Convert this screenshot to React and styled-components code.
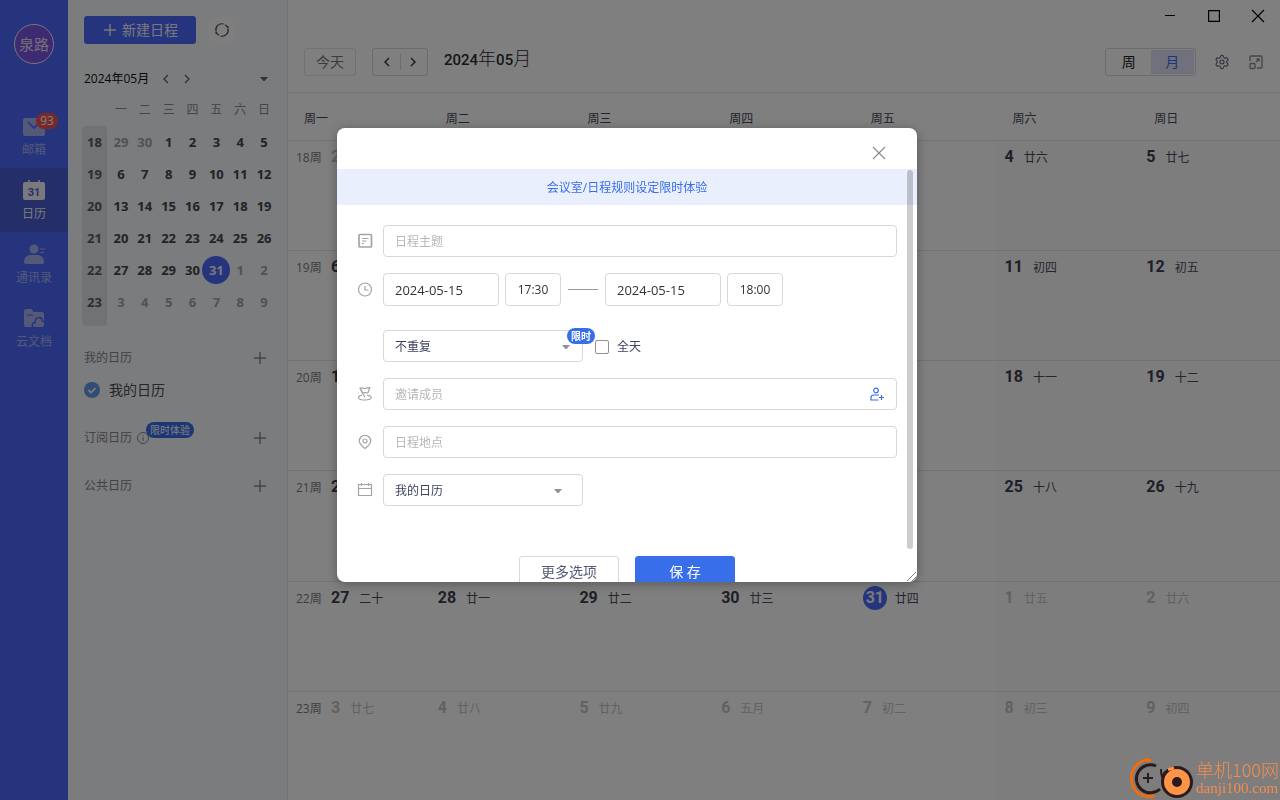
import React, { useState } from 'react';
import styled, { createGlobalStyle, css } from 'styled-components';
import { Settings } from 'lucide-react';

const GlobalStyle = createGlobalStyle`
  * {
    box-sizing: border-box;
  }

  body {
    margin: 0;
    overflow: hidden;
    color: #44475a;
    font-family: 'Open Sans', 'Noto Sans CJK SC', sans-serif;
    font-size: 12px;
    line-height: 16px;
  }

  button, input, select {
    margin: 0;
    padding: 0;
    border: none;
    background: none;
    color: inherit;
    font: inherit;
    outline: none;
  }

  button {
    cursor: pointer;
  }

  svg {
    display: block;
    flex: none;
  }
`;

const Page = styled.div`
  display: flex;
  height: 100vh;
  background: #fff;
`;

/* ---------- left navigation ---------- */

const NavWrapper = styled.nav`
  flex: none;
  width: 68px;
  background: #4d69fd;
`;

const Avatar = styled.div`
  width: 40px;
  height: 40px;
  margin: 24px auto 40px;
  border: 1px solid #f0ecfa;
  border-radius: 50%;
  background: #7c54e0;
  color: #e4def4;
  font-size: 15px;
  line-height: 38px;
  text-align: center;
`;

const NavItem = styled.button`
  position: relative;
  display: flex;
  flex-direction: column;
  align-items: center;
  gap: 5px;
  width: 100%;
  height: 64px;
  padding-top: 11px;
  color: ${({ $active }) => ($active ? '#f4f4fa' : '#a8b2f0')};
  background: ${({ $active }) => ($active ? '#495cd2' : 'transparent')};
`;

const NavBadge = styled.span`
  position: absolute;
  top: 9px;
  left: 36px;
  width: 22px;
  height: 16px;
  border-radius: 8px;
  background: #f0524f;
  color: #fff;
  text-align: center;
`;

/* ---------- side panel ---------- */

const Side = styled.aside`
  flex: none;
  width: 220px;
  padding: 16px 11px 0 16px;
  border-right: 1px solid #e4e6e9;
  background: #f6f8fa;
`;

const SideTop = styled.div`
  display: flex;
  gap: 12px;
`;

const NewButton = styled.button`
  display: flex;
  align-items: center;
  justify-content: center;
  gap: 6px;
  width: 112px;
  height: 28px;
  padding-left: 2px;
  border-radius: 3px;
  background: #4d69fd;
  color: #f0f0f8;
  font-size: 14px;
`;

const RefreshButton = styled.button`
  display: flex;
  align-items: center;
  justify-content: center;
  width: 28px;
  height: 28px;
  border-radius: 50%;
  background: #fdfdfd;
`;

const MonthRow = styled.div`
  display: flex;
  align-items: center;
  gap: 13px;
  margin: 27px 8px 7px 0;
  color: #101010;

  button {
    color: #666;
  }

  button:last-child {
    margin-left: auto;
  }
`;

const MiniCalendar = styled.div`
  display: flex;
  align-items: flex-end;
  gap: 2px;
  margin: 0 0 16px -2px;
  font-size: 13px;
  font-weight: 700;
  line-height: 32px;
  text-align: center;
`;

const WeekNumbers = styled.div`
  width: 25px;
  height: 200px;
  border-radius: 4px;
  background: #e2e4e6;
  color: #5a5c66;
`;

const MiniDays = styled.div`
  display: grid;
  flex: 1;
  grid-template-columns: repeat(7, minmax(0, 1fr));
  padding-bottom: 8px;
`;

const MiniWeekday = styled.span`
  color: #8a8c92;
  font-size: 12px;
  font-weight: 400;
`;

const MiniDay = styled.button`
  display: flex;
  align-items: center;
  justify-content: center;
  height: 32px;
  color: ${({ $faded }) => ($faded ? '#a2a4a8' : '#44464e')};

  ${({ $today }) =>
    $today &&
    css`
      span {
        flex: none;
        width: 28px;
        border-radius: 50%;
        background: #4d69fd;
        color: #f0f0f8;
        line-height: 28px;
      }
    `}
`;

const Group = styled.section`
  margin-bottom: 16px;
`;

const GroupRow = styled.div`
  position: relative;
  display: flex;
  align-items: center;
  gap: 5px;
  height: 32px;
  padding-right: 8px;
  color: #83858c;

  button {
    margin-left: auto;
    padding: 2px;
    color: #85878a;
  }
`;

const CalendarCheck = styled.label`
  display: flex;
  align-items: center;
  gap: 9px;
  height: 32px;
  color: #4a4c5a;
  font-size: 14px;

  input {
    appearance: none;
    width: 16px;
    height: 16px;
    border-radius: 50%;
    background: #649ae8
      url("data:image/svg+xml,%3Csvg xmlns='http://www.w3.org/2000/svg' viewBox='0 0 16 16'%3E%3Cpath d='M4.5 8l2.5 2.6 4.6-4.6' fill='none' stroke='%23fff' stroke-width='1.6'/%3E%3C/svg%3E");
  }
`;

const Tag = styled.span`
  position: absolute;
  top: ${({ $top }) => $top}px;
  left: ${({ $left }) => $left}px;
  padding: 0 4px;
  border-radius: 8px;
  background: #386eea;
  color: #fff;
  font-size: 10px;
  font-weight: ${({ $bold }) => ($bold ? 700 : 400)};
  white-space: nowrap;
`;

/* ---------- month view ---------- */

const Main = styled.main`
  display: flex;
  flex: 1;
  flex-direction: column;
  min-width: 0;
`;

const WindowBar = styled.div`
  display: flex;
  flex: none;
  justify-content: flex-end;
  height: 32px;

  button {
    display: flex;
    align-items: center;
    justify-content: center;
    width: 44px;
    color: #000;
  }
`;

const Toolbar = styled.header`
  display: flex;
  flex: none;
  gap: 16px;
  padding: 16px;
  border-bottom: 1px solid #e4e5e8;
`;

const TodayButton = styled.button`
  width: 52px;
  height: 28px;
  border: 1px solid #e4e5e8;
  border-radius: 3px;
  color: #777;
  font-size: 14px;
`;

const Pager = styled.div`
  display: flex;
  align-items: center;
  width: 56px;
  height: 28px;
  padding: 0 2px;
  border: 1px solid #d8d9dc;
  border-radius: 3px;
  color: #333;

  button {
    display: flex;
    flex: 1;
    justify-content: center;
  }

  button + button {
    padding: 3px 0;
    border-left: 1px solid #d8d9dc;
  }
`;

const MonthTitle = styled.h1`
  margin: 0;
  color: #2c2c34;
  font-size: 18px;
  font-weight: 300;
  line-height: 20px;

  b {
    font-family: Roboto, sans-serif;
    font-size: 15px;
    font-weight: 500;
  }
`;

const Tools = styled.div`
  display: flex;
  align-items: center;
  gap: 18px;
  height: 28px;
  margin-left: auto;
`;

const ViewSwitch = styled.div`
  display: flex;
  width: 91px;
  height: 28px;
  padding: 1px;
  border: 1px solid #d8d9dc;
  border-radius: 3px;
`;

const ViewButton = styled.button`
  flex: 1;
  color: ${({ $active }) => ($active ? '#386eea' : '#222')};
  background: ${({ $active }) => ($active ? '#e0e2fa' : 'transparent')};
  font-size: 14px;
`;

const IconButton = styled.button`
  color: ${({ $color }) => $color};
`;

const Weekdays = styled.div`
  display: grid;
  flex: none;
  grid-template-columns: repeat(7, 1fr);
  height: 48px;
  border-bottom: 1px solid #e4e5e8;
  line-height: 52px;

  span {
    padding-left: 16px;
  }
`;

/* the border of the last week falls below the window */
const MonthGrid = styled.div`
  display: grid;
  flex: 1;
  grid-template-columns: repeat(7, 1fr);
  grid-auto-rows: 1fr;
  margin-bottom: -2px;
`;

const DayCell = styled.div`
  display: flex;
  align-items: flex-start;
  padding: 4px 0 0 8px;
  border-bottom: 1px solid #e4e5e8;
  background: ${({ $weekend }) => ($weekend ? '#fbfbfc' : 'transparent')};
  color: ${({ $faded }) => ($faded ? '#c2c3c8' : '#4a4c5c')};
  line-height: 26px;
`;

const WeekLabel = styled.span`
  width: 35px;
  color: #7a7a7e;
`;

const DayNumber = styled.span`
  margin-right: 10px;
  font-family: Roboto, sans-serif;
  font-size: 16px;
  font-weight: 700;
  line-height: 24px;
  color: ${({ $faded }) => ($faded ? '#c2c3c8' : '#3c3e4e')};

  ${({ $today }) =>
    $today &&
    css`
      width: 24px;
      margin-right: 8px;
      border-radius: 50%;
      background: #4d69fd;
      color: #f4f4fa;
      text-align: center;
    `}
`;

/* ---------- dialog ---------- */

const Overlay = styled.div`
  position: fixed;
  inset: 0;
  background: rgba(0, 0, 0, 0.5);
`;

const Dialog = styled.div`
  position: absolute;
  top: 128px;
  left: calc(50% - 303px);
  width: 580px;
  height: 454px;
  border-radius: 8px;
  background: #fff;
  box-shadow: 0 2px 12px rgba(0, 0, 0, 0.3);
  overflow: hidden;
`;

const DialogHeader = styled.div`
  display: flex;
  align-items: center;
  justify-content: flex-end;
  height: 41px;
  padding: 8px 31px 0;

  button {
    color: #8a8c90;
  }
`;

const Notice = styled.a`
  display: block;
  height: 36px;
  background: #e9effd;
  color: #386eea;
  line-height: 38px;
  text-align: center;
  text-decoration: none;
`;

const ScrollThumb = styled.div`
  position: absolute;
  top: 42px;
  right: 4px;
  width: 6px;
  height: 379px;
  border-radius: 3px;
  background: rgba(0, 0, 0, 0.2);
`;

const ResizeGrip = styled.svg`
  position: absolute;
  right: 0;
  bottom: 0;
`;

const Form = styled.form`
  display: flex;
  flex-direction: column;
  gap: 16px;
  padding: 20px 20px 0;
`;

const Row = styled.div`
  display: flex;
  align-items: center;
  gap: 10px;
  padding-top: ${({ $spaced }) => ($spaced ? 8 : 0)}px;
`;

const RowIcon = styled.span`
  width: 16px;
  color: #a3a4a8;
`;

const Fields = styled.div`
  position: relative;
  display: flex;
  flex: 1;
  align-items: center;
  gap: 6px;
`;

const fieldStyle = css`
  height: ${({ $tall }) => ($tall ? 33 : 32)}px;
  padding: 0 11px;
  border: 1px solid #d8d8dc;
  border-radius: 4px;
  background: #fff;
  color: #333;
`;

const TextField = styled.input`
  ${fieldStyle}
  flex: 1;

  &::placeholder {
    color: #b6b7ba;
    opacity: 1;
  }
`;

const DateField = styled.input`
  ${fieldStyle}
  width: 116px;
  font-size: 13px;
`;

const TimeField = styled.input`
  ${fieldStyle}
  width: 56px;
  padding: 0;
  text-align: center;
`;

const Dash = styled.span`
  width: 30px;
  height: 1px;
  margin: 0 1px;
  background: #9a9a9e;
`;

const SelectBox = styled.div`
  position: relative;
  width: 200px;

  svg {
    position: absolute;
    top: 14px;
    right: ${({ $inset }) => $inset}px;
    color: #8f9095;
    pointer-events: none;
  }
`;

const Select = styled.select`
  ${fieldStyle}
  appearance: none;
  width: 100%;
  padding-top: 2px;
  color: #3c4260;
`;

const AllDay = styled.label`
  display: flex;
  align-items: center;
  gap: 8px;
  margin-left: 6px;
  padding-top: 1px;
  color: #3c4260;

  input {
    appearance: none;
    width: 14px;
    height: 14px;
    border: 1px solid #8f9095;
    border-radius: 2px;
  }

  input:checked {
    background: #386eea;
  }
`;

const InviteButton = styled.button`
  position: absolute;
  right: 12px;
  color: #386eea;
`;

const Actions = styled.div`
  display: flex;
  justify-content: center;
  gap: 16px;
  padding-top: 34px;
`;

const ActionButton = styled.button`
  width: 100px;
  height: 32px;
  border: 1px solid ${({ $primary }) => ($primary ? '#386eea' : '#d8d9e0')};
  border-radius: 3px;
  background: ${({ $primary }) => ($primary ? '#386eea' : '#fff')};
  color: ${({ $primary }) => ($primary ? '#fff' : '#555a75')};
  font-size: 14px;
`;

const Watermark = styled.div`
  position: fixed;
  right: 1px;
  bottom: 0;
  display: flex;
  align-items: center;
  gap: 2px;
  color: #f68d4c;
`;

const WatermarkText = styled.div`
  font-family: 'Noto Sans CJK SC', sans-serif;
  font-size: 18px;
  font-weight: 300;
  line-height: 20px;

  small {
    display: block;
    font-family: 'Liberation Serif', serif;
    font-size: 15px;
    font-weight: 400;
    line-height: 18px;
  }
`;

/* ---------- icons ---------- */

const Stroke = ({ size = 16, box = 16, width = 1, children }) => (
  <svg
    width={size}
    height={size}
    viewBox={`0 0 ${box} ${box}`}
    fill="none"
    stroke="currentColor"
    strokeWidth={width}
  >
    {children}
  </svg>
);

const Chevron = ({ right }) => (
  <svg width="8" height="10" viewBox="0 0 8 10" fill="none" stroke="currentColor" strokeWidth="1.4">
    <path d={right ? 'M2 1l4 4-4 4' : 'M6 1L2 5l4 4'} />
  </svg>
);

const Caret = () => (
  <svg width="8" height="6" viewBox="0 0 8 6" fill="currentColor">
    <path d="M0 1h8L5 4.600q-1 1-2 0z" />
  </svg>
);

const Plus = () => (
  <Stroke size={12} box={12} width={1.4}>
    <path d="M6 0v12M0 6h12" />
  </Stroke>
);

const MailIcon = () => (
  <svg width="22" height="22" viewBox="0 0 22 22">
    <rect y="3" width="22" height="18" rx="2" fill="currentColor" />
    <path d="M5 7l6 6 6-6" fill="none" stroke="#4d69fd" strokeWidth="1.6" />
  </svg>
);

const NavCalendarIcon = () => (
  <svg width="22" height="22" viewBox="0 0 22 22">
    <path d="M6 1v4M16 1v4" stroke="currentColor" strokeWidth="1.6" />
    <rect y="3" width="22" height="18" rx="2" fill="currentColor" />
    <text
      x="11"
      y="17"
      fill="#4860dc"
      fontFamily="Roboto"
      fontSize="11"
      fontWeight="700"
      textAnchor="middle"
    >
      31
    </text>
  </svg>
);

const ContactsIcon = () => (
  <svg width="22" height="22" viewBox="0 0 22 22" fill="currentColor">
    <circle cx="11" cy="6" r="4.5" />
    <path d="M1 19c0-4 2.5-7 6.500-7h7c4 0 6.500 3 6.500 7q0 2-2 2H3q-2 0-2-2z" />
    <path d="M17 6h5M17 9.500h4" stroke="currentColor" />
  </svg>
);

const DocsIcon = () => (
  <svg width="22" height="22" viewBox="0 0 22 22">
    <path d="M1 4q0-2 2-2h5.500l2 3H19q2 0 2 2v11q0 2-2 2H3q-2 0-2-2z" fill="currentColor" />
    <path d="M4 8h6" stroke="#4d69fd" />
    <path
      d="M11 20.500c-3-1-2-5 1-5C12 9.500 18.500 9 19.500 14c2 .5 3 3 2 6"
      fill="none"
      stroke="#4d69fd"
      strokeWidth="1.500"
    />
  </svg>
);

const RefreshIcon = () => (
  <Stroke width={1.2}>
    <g stroke="#45464e">
      <path d="M2 9A6 6 0 0 1 9.500 2M14 7a6 6 0 0 1-7.500 7" />
      <path d="M11 2.700A6 6 0 0 1 13.600 5.500M5 13.300A6 6 0 0 1 2.400 10.500" />
      <path d="M13.900 4v2.500M2.100 12V9.500" />
    </g>
  </Stroke>
);

const InfoIcon = () => (
  <Stroke size={12} box={12}>
    <circle cx="6" cy="6" r="5.500" />
    <path d="M6 5v4M6 3v1" />
  </Stroke>
);

const PopOutIcon = () => (
  <Stroke width={1.4}>
    <path d="M2 7V3q0-1 1-1h10q1 0 1 1v10q0 1-1 1H9" />
    <rect x="2" y="9.500" width="5" height="5" rx="1" />
    <path d="M8 8l3-3M8.500 5H11v2.500" />
  </Stroke>
);

const TitleIcon = () => (
  <Stroke width={1.7}>
    <rect x="2" y="1.500" width="12.500" height="12.500" rx="1" />
    <path d="M5 5.500h6.500M5 8h4.500M5 10.500h2" strokeWidth="1.200" />
  </Stroke>
);

const ClockIcon = () => (
  <Stroke width={1.2}>
    <circle cx="8" cy="7.500" r="6.500" />
    <path d="M8 4v4h3.500" />
  </Stroke>
);

const PeopleIcon = () => (
  <Stroke width={1.2}>
    <path d="M3 2.200c2-1.400 3.500.8 5 .3s3-1 4.800-.8L11 6.500C9.500 7.500 8 5.800 5.500 7z" />
    <path d="M3 2.200L8 11.500" />
    <path d="M5 9.200C-.5 10 .5 14 8 14s8.500-4 2-4.800" />
  </Stroke>
);

const PinIcon = () => (
  <Stroke width={1.2}>
    <path d="M8 14.500C4 11.500 2.300 9.500 2.300 7a5.700 5.700 0 0 1 11.400 0c0 2.500-1.700 4.500-5.700 7.500z" />
    <circle cx="8" cy="7" r="2" />
  </Stroke>
);

const DateIcon = () => (
  <Stroke width={1.2}>
    <path d="M1.500 2.500h13v11h-13zM1.500 6.500h13M4.500 1v3M11.500 1v3" />
  </Stroke>
);

const InviteIcon = () => (
  <Stroke width={1.2}>
    <circle cx="7" cy="4.500" r="2.300" />
    <path d="M10 9H5q-3 0-3 2.500V14H9.500M12.500 9v5M10 11.500h5" />
  </Stroke>
);

const CloseIcon = ({ size = 14 }) => (
  <Stroke size={size} box={14} width={1.2}>
    <path d="M1 1l12 12M13 1L1 13" />
  </Stroke>
);

const LogoMark = () => (
  <svg width="64" height="44" viewBox="0 0 64 44" fill="none">
    <path d="M21 4C9 2-1 14 2 27c2 9 10 15 20 13" stroke="#ff6a00" strokeWidth="2.500" />
    <path d="M12 5q4-5 9-1v2zM16 39q5 6 10 1l-2-1z" fill="#ff6a00" />
    <path d="M26 10A14 14 0 1 0 30 33" stroke="#2a1c1c" strokeWidth="3" />
    <path d="M18 17v10M13 22h10M31 13q0 8 3 11M32 22q2-7 8-9" stroke="#2a1c1c" strokeWidth="2" />
    <circle cx="47" cy="26" r="14.500" fill="#ff9448" stroke="#2a1c1c" strokeWidth="3" />
    <circle cx="47" cy="26" r="5" fill="#2a1c1c" />
    <path d="M38 13.500l6-1.500" stroke="#ff9448" strokeWidth="3" />
  </svg>
);

/* ---------- data ---------- */

const navItems = [
  { label: '邮箱', icon: <MailIcon />, badge: 93 },
  { label: '日历', icon: <NavCalendarIcon />, active: true },
  { label: '通讯录', icon: <ContactsIcon /> },
  { label: '云文档', icon: <DocsIcon /> },
];

const weekdays = ['一', '二', '三', '四', '五', '六', '日'];

const lunar = [
  '廿一 廿二 廿三 廿四 廿五 廿六 廿七',
  '廿八 廿九 初一 初二 初三 初四 初五',
  '初六 初七 初八 初九 初十 十一 十二',
  '十三 十四 十五 十六 十七 十八 十九',
  '二十 廿一 廿二 廿三 廿四 廿五 廿六',
  '廿七 廿八 廿九 五月 初二 初三 初四',
]
  .join(' ')
  .split(' ');

// the grid starts on Monday 29 April
const days = lunar.map((name, i) => {
  const date = new Date(2024, 3, 29 + i);
  return {
    number: date.getDate(),
    lunar: name,
    faded: date.getMonth() !== 4,
    today: date.getMonth() === 4 && date.getDate() === 31,
    weekend: i % 7 > 4,
    week: i % 7 === 0 ? 18 + i / 7 : null,
  };
});

/* ---------- parts ---------- */

const Nav = () => (
  <NavWrapper>
    <Avatar>泉路</Avatar>
    {navItems.map(({ label, icon, badge, active }) => (
      <NavItem key={label} $active={active}>
        {icon}
        {label}
        {badge && <NavBadge>{badge}</NavBadge>}
      </NavItem>
    ))}
  </NavWrapper>
);

const SidePanel = () => (
  <Side>
    <SideTop>
      <NewButton>
        <Plus />
        新建日程
      </NewButton>
      <RefreshButton aria-label="刷新">
        <RefreshIcon />
      </RefreshButton>
    </SideTop>
    <MonthRow>
      2024年05月
      <button aria-label="上个月">
        <Chevron />
      </button>
      <button aria-label="下个月">
        <Chevron right />
      </button>
      <button aria-label="选择月份">
        <Caret />
      </button>
    </MonthRow>
    <MiniCalendar>
      <WeekNumbers>
        {days
          .filter(({ week }) => week)
          .map(({ week }) => (
            <div key={week}>{week}</div>
          ))}
      </WeekNumbers>
      <MiniDays>
        {weekdays.map((day) => (
          <MiniWeekday key={day}>{day}</MiniWeekday>
        ))}
        {days.map(({ number, faded, today }, i) => (
          <MiniDay key={i} $faded={faded} $today={today}>
            <span>{number}</span>
          </MiniDay>
        ))}
      </MiniDays>
    </MiniCalendar>
    <Group>
      <GroupRow>
        我的日历
        <button aria-label="添加我的日历">
          <Plus />
        </button>
      </GroupRow>
      <CalendarCheck>
        <input type="checkbox" defaultChecked />
        我的日历
      </CalendarCheck>
    </Group>
    <Group>
      <GroupRow>
        订阅日历
        <InfoIcon />
        <Tag $top={0} $left={62}>
          限时体验
        </Tag>
        <button aria-label="添加订阅日历">
          <Plus />
        </button>
      </GroupRow>
    </Group>
    <Group>
      <GroupRow>
        公共日历
        <button aria-label="添加公共日历">
          <Plus />
        </button>
      </GroupRow>
    </Group>
  </Side>
);

const MonthView = () => (
  <Main>
    <WindowBar>
      <button aria-label="最小化">
        <Stroke size={12} box={12}>
          <path d="M1 5.500h10" />
        </Stroke>
      </button>
      <button aria-label="最大化">
        <Stroke size={12} box={12} width={1.4}>
          <path d="M.5.5h11v11H.5z" />
        </Stroke>
      </button>
      <button aria-label="关闭窗口">
        <CloseIcon />
      </button>
    </WindowBar>
    <Toolbar>
      <TodayButton>今天</TodayButton>
      <Pager>
        <button aria-label="上一页">
          <Chevron />
        </button>
        <button aria-label="下一页">
          <Chevron right />
        </button>
      </Pager>
      <MonthTitle>
        <b>2024</b>年<b>05</b>月
      </MonthTitle>
      <Tools>
        <ViewSwitch>
          <ViewButton>周</ViewButton>
          <ViewButton $active>月</ViewButton>
        </ViewSwitch>
        <IconButton $color="#5c5e70" aria-label="设置">
          <Settings size={16} strokeWidth={1.6} />
        </IconButton>
        <IconButton $color="#8f9095" aria-label="弹出">
          <PopOutIcon />
        </IconButton>
      </Tools>
    </Toolbar>
    <Weekdays>
      {weekdays.map((day) => (
        <span key={day}>周{day}</span>
      ))}
    </Weekdays>
    <MonthGrid>
      {days.map((day, i) => (
        <DayCell key={i} $faded={day.faded} $weekend={day.weekend}>
          {day.week && <WeekLabel>{day.week}周</WeekLabel>}
          <DayNumber $faded={day.faded} $today={day.today}>
            {day.number}
          </DayNumber>
          {day.lunar}
        </DayCell>
      ))}
    </MonthGrid>
  </Main>
);

const EventDialog = () => {
  const [allDay, setAllDay] = useState(false);

  return (
    <Dialog role="dialog" aria-label="新建日程">
      <DialogHeader>
        <button aria-label="关闭">
          <CloseIcon />
        </button>
      </DialogHeader>
      <Notice href="#">会议室/日程规则设定限时体验</Notice>
      <Form onSubmit={(e) => e.preventDefault()}>
        <Row>
          <RowIcon>
            <TitleIcon />
          </RowIcon>
          <Fields>
            <TextField aria-label="日程主题" placeholder="日程主题" />
          </Fields>
        </Row>
        <Row>
          <RowIcon>
            <ClockIcon />
          </RowIcon>
          <Fields>
            <DateField $tall aria-label="开始日期" defaultValue="2024-05-15" />
            <TimeField $tall aria-label="开始时间" defaultValue="17:30" />
            <Dash />
            <DateField $tall aria-label="结束日期" defaultValue="2024-05-15" />
            <TimeField $tall aria-label="结束时间" defaultValue="18:00" />
          </Fields>
        </Row>
        <Row $spaced>
          <RowIcon />
          <Fields>
            <SelectBox $inset={13}>
              <Select aria-label="重复">
                <option>不重复</option>
              </Select>
              <Caret />
            </SelectBox>
            <Tag $bold $top={-2} $left={184}>
              限时
            </Tag>
            <AllDay>
              <input
                type="checkbox"
                checked={allDay}
                onChange={() => setAllDay(!allDay)}
              />
              全天
            </AllDay>
          </Fields>
        </Row>
        <Row>
          <RowIcon>
            <PeopleIcon />
          </RowIcon>
          <Fields>
            <TextField aria-label="邀请成员" placeholder="邀请成员" />
            <InviteButton type="button" aria-label="选择成员">
              <InviteIcon />
            </InviteButton>
          </Fields>
        </Row>
        <Row>
          <RowIcon>
            <PinIcon />
          </RowIcon>
          <Fields>
            <TextField aria-label="日程地点" placeholder="日程地点" />
          </Fields>
        </Row>
        <Row>
          <RowIcon>
            <DateIcon />
          </RowIcon>
          <Fields>
            <SelectBox $inset={21}>
              <Select aria-label="所属日历">
                <option>我的日历</option>
              </Select>
              <Caret />
            </SelectBox>
          </Fields>
        </Row>
        <Actions>
          <ActionButton type="button">更多选项</ActionButton>
          <ActionButton $primary>保 存</ActionButton>
        </Actions>
      </Form>
      <ScrollThumb />
      <ResizeGrip width="12" height="12" stroke="#888" strokeWidth="1">
        <path d="M2 11l9-9M6 12l6-6" />
      </ResizeGrip>
    </Dialog>
  );
};

const App = () => (
  <>
    <GlobalStyle />
    <Page>
      <Nav />
      <SidePanel />
      <MonthView />
    </Page>
    <Overlay>
      <EventDialog />
    </Overlay>
    <Watermark>
      <LogoMark />
      <WatermarkText>
        单机100网
        <small>danji100.com</small>
      </WatermarkText>
    </Watermark>
  </>
);

export default App;
